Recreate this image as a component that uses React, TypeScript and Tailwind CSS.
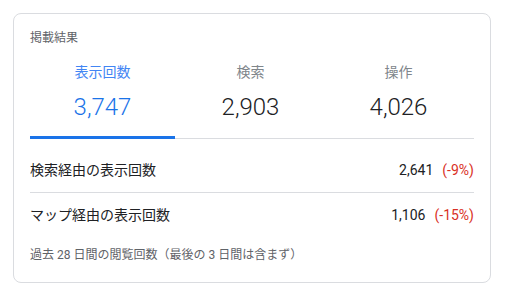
import React from "react";

const font = { fontFamily: "Roboto, 'Noto Sans CJK JP', sans-serif" };

export default function App() {
  const tabs = [
    { label: "表示回数", value: "3,747", active: true },
    { label: "検索", value: "2,903", active: false },
    { label: "操作", value: "4,026", active: false },
  ];
  return (
    <div className="w-[505px] h-[296px] bg-white pt-[13px] pl-[13px]" style={font}>
      <div className="w-[478px] h-[270px] rounded-[8px] border border-[#dadce0] px-[16px] pt-[16px] flex flex-col">
        <div className="text-[12px] leading-[16px] text-[#5f6368]">掲載結果</div>
        <div className="mt-[16px] flex gap-[3px] border-b border-[#dadce0] relative">
          {tabs.map((t) => (
            <div key={t.label} className="w-[145px] relative flex flex-col items-center pb-[15px]">
              <div className={`text-[14px] leading-[20px] ${t.active ? "text-[#4285f4]" : "text-[#80868b]"}`}>{t.label}</div>
              <div className={`mt-[9px] text-[24px] leading-[32px] font-light ${t.active ? "text-[#1a73e8]" : "text-[#202124]"}`}>{t.value}</div>
              {t.active && <div className="absolute left-0 right-0 bottom-[-1px] h-[3px] bg-[#1a73e8]" />}
            </div>
          ))}
        </div>
        <div className="pt-[21px] pb-[12px] flex justify-between text-[14px] leading-[20px] text-[#202124] border-b border-[#dadce0]">
          <span>検索経由の表示回数</span>
          <span className="flex gap-[9px]">
            <span>2,641</span>
            <span className="text-[#d93025]">(-9%)</span>
          </span>
        </div>
        <div className="pt-[12px] flex justify-between text-[14px] leading-[20px] text-[#202124]">
          <span>マップ経由の表示回数</span>
          <span className="flex gap-[9px]">
            <span>1,106</span>
            <span className="text-[#d93025]">(-15%)</span>
          </span>
        </div>
        <div className="mt-[22px] text-[12px] leading-[16px] text-[#5f6368]">
          過去 28 日間の閲覧回数（最後の 3 日間は含まず）
        </div>
      </div>
    </div>
  );
}
